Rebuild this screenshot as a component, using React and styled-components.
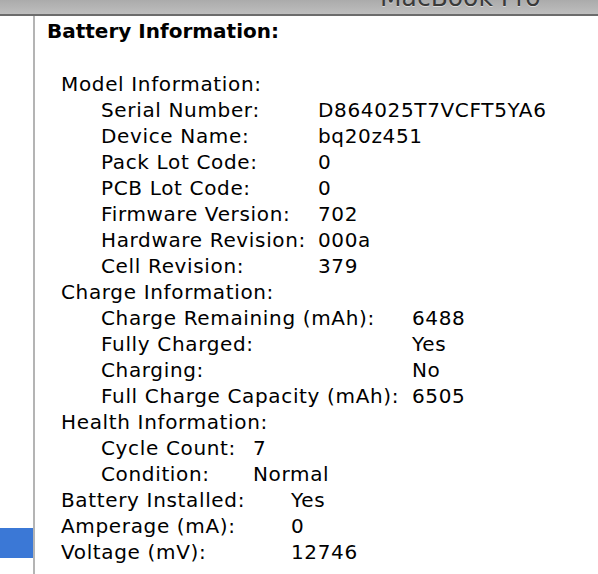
import React from "react";
import styled, { createGlobalStyle } from "styled-components";

const GlobalStyle = createGlobalStyle`
  html, body {
    margin: 0;
    padding: 0;
    background: #ffffff;
  }
  body {
    font-family: "DejaVu Sans", "Liberation Sans", sans-serif;
    overflow: hidden;
  }
`;

const Window = styled.div`
  width: 598px;
  height: 574px;
  display: flex;
  flex-direction: column;
  background: #fff;
  overflow: hidden;
`;

const TitleBar = styled.div`
  height: 14px;
  flex: none;
  position: relative;
  overflow: hidden;
  background: linear-gradient(to bottom, #ababab, #bebebe);
  border-bottom: 2px solid #6c6c6c;
`;

const WindowTitle = styled.span`
  position: absolute;
  left: 380px;
  top: -15px;
  font-size: 25px;
  line-height: 26px;
  color: #3a3a3a;
  text-shadow: 0 1px 0 rgba(255, 255, 255, 0.5);
`;

const Body = styled.div`
  flex: 1;
  display: flex;
  min-height: 0;
`;

const Sidebar = styled.div`
  width: 33px;
  flex: none;
  display: flex;
  flex-direction: column;
  padding-top: 512px;
  border-right: 2px solid #b4b4b4;
`;

const SelectedRow = styled.div`
  height: 30px;
  background: #3b78d6;
`;

const Content = styled.div`
  flex: 1;
  padding: 2px 0 0 12px;
  font-size: 20px;
  line-height: 26px;
  letter-spacing: 0.65px;
  color: #000;
`;

const Heading = styled.div`
  font-weight: bold;
  letter-spacing: 0;
  margin-bottom: 27px;
`;

const Row = styled.div`
  display: flex;
  padding-left: ${(p) => p.$indent}px;
  white-space: nowrap;
`;

const Label = styled.span`
  width: ${(p) => (p.$width ? `${p.$width}px` : "auto")};
  flex: none;
`;

const Value = styled.span``;

const groups = [
  {
    title: "Model Information:",
    col: 217,
    rows: [
      ["Serial Number:", "D864025T7VCFT5YA6"],
      ["Device Name:", "bq20z451"],
      ["Pack Lot Code:", "0"],
      ["PCB Lot Code:", "0"],
      ["Firmware Version:", "702"],
      ["Hardware Revision:", "000a"],
      ["Cell Revision:", "379"],
    ],
  },
  {
    title: "Charge Information:",
    col: 311,
    rows: [
      ["Charge Remaining (mAh):", "6488"],
      ["Fully Charged:", "Yes"],
      ["Charging:", "No"],
      ["Full Charge Capacity (mAh):", "6505"],
    ],
  },
  {
    title: "Health Information:",
    col: 152,
    rows: [
      ["Cycle Count:", "7"],
      ["Condition:", "Normal"],
    ],
  },
];

const topRows = [
  ["Battery Installed:", "Yes"],
  ["Amperage (mA):", "0"],
  ["Voltage (mV):", "12746"],
];

export default function App() {
  return (
    <>
      <GlobalStyle />
      <Window>
        <TitleBar>
          <WindowTitle>MacBook Pro</WindowTitle>
        </TitleBar>
        <Body>
          <Sidebar>
            <SelectedRow />
          </Sidebar>
          <Content>
            <Heading>Battery Information:</Heading>
            {groups.map((g) => (
              <React.Fragment key={g.title}>
                <Row $indent={14}>
                  <Label>{g.title}</Label>
                </Row>
                {g.rows.map(([k, v]) => (
                  <Row key={k} $indent={54}>
                    <Label $width={g.col}>{k}</Label>
                    <Value>{v}</Value>
                  </Row>
                ))}
              </React.Fragment>
            ))}
            {topRows.map(([k, v]) => (
              <Row key={k} $indent={14}>
                <Label $width={230}>{k}</Label>
                <Value>{v}</Value>
              </Row>
            ))}
          </Content>
        </Body>
      </Window>
    </>
  );
}
